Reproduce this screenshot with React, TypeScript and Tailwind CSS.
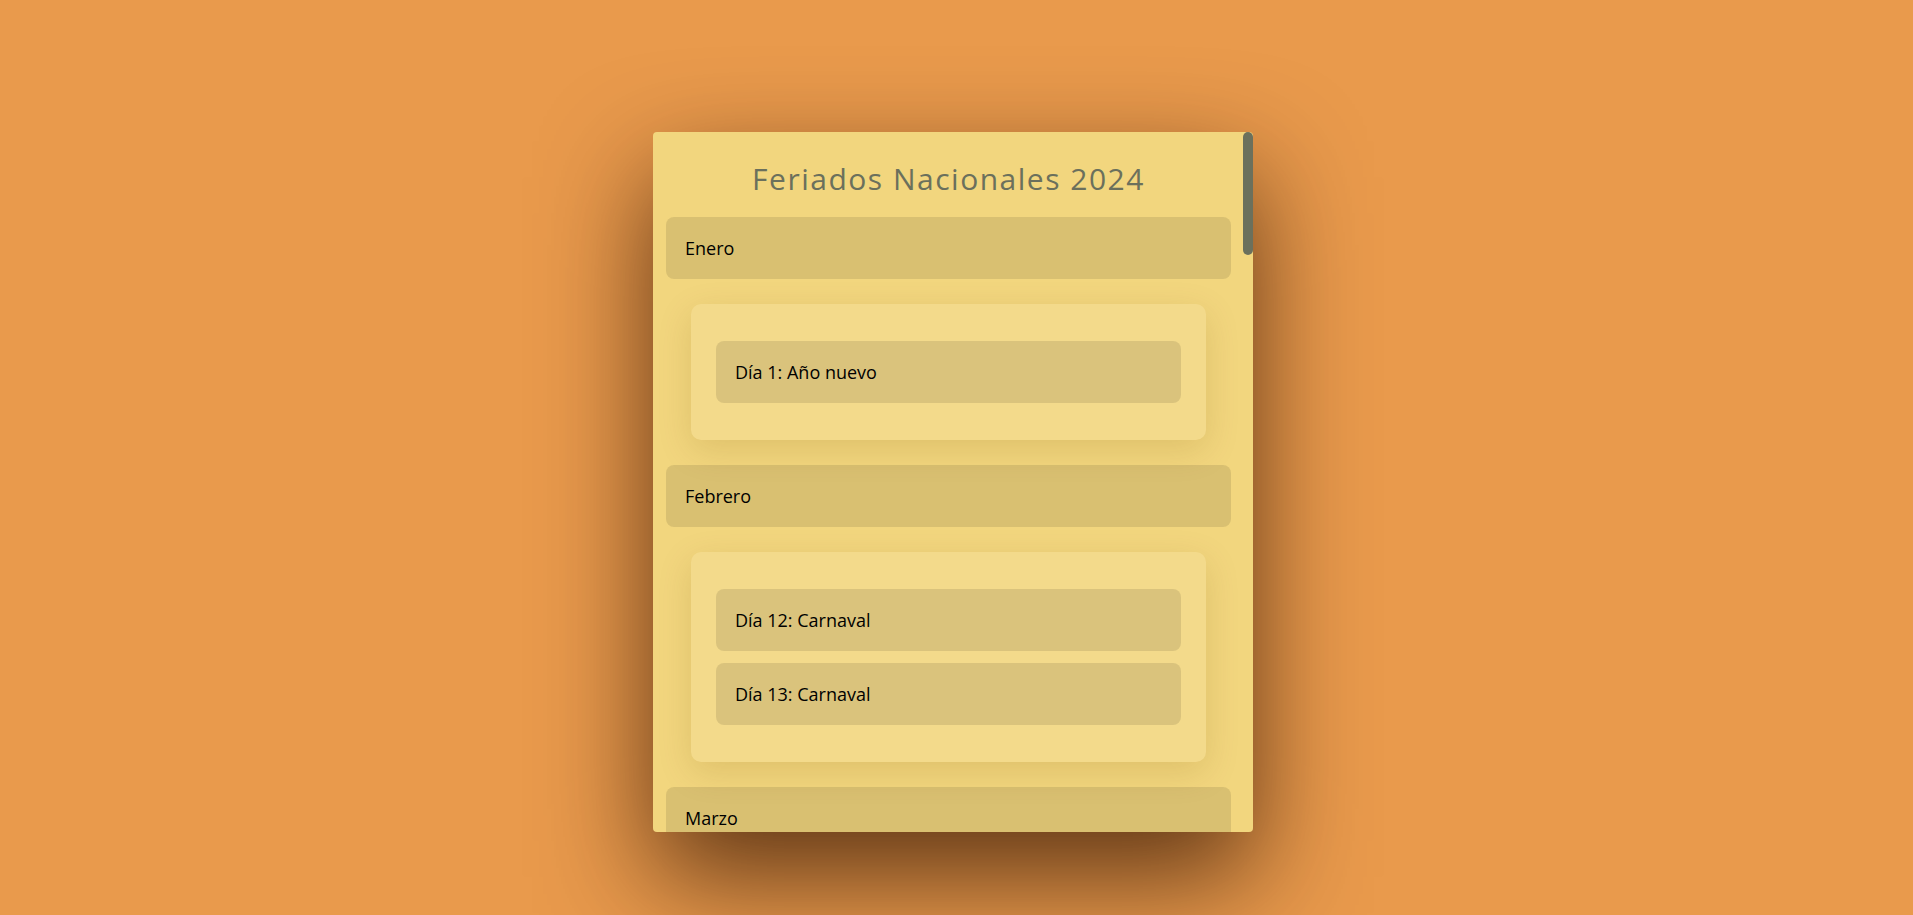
import React from "react";

type Month = { name: string; days: string[] };

const months: Month[] = [
  { name: "Enero", days: ["Día 1: Año nuevo"] },
  { name: "Febrero", days: ["Día 12: Carnaval", "Día 13: Carnaval"] },
  { name: "Marzo", days: ["Día 24: Día de la Memoria"] },
];

export default function App() {
  return (
    <div
      className="w-full h-screen overflow-hidden bg-[#e99a4c] flex justify-center pt-[132px] pr-[7px]"
      style={{ fontFamily: '"Open Sans", "Noto Sans", sans-serif' }}
    >
      <div className="w-[600px] h-[700px] rounded-[4px] bg-[#f2d67e] shadow-[0_45px_110px_rgba(40,15,0,0.72)] overflow-hidden flex">
        <div className="flex-1 min-w-0 h-full overflow-hidden pl-[13px] pr-[12px]">
          <h1 className="pt-[29px] mb-[20px] text-center text-[30px] leading-[36px] font-normal tracking-[1.5px] text-[#6b705c]">
            Feriados Nacionales 2024
          </h1>
          {months.map((m) => (
            <section key={m.name}>
              <div className="rounded-[8px] bg-[rgba(0,0,0,0.1)] py-[20px] pl-[19px] pr-[20px] text-[18px] leading-[22px] text-black">
                {m.name}
              </div>
              <div className="m-[25px] rounded-[10px] bg-[rgba(255,255,255,0.1)] p-[25px] shadow-[0_10px_34px_rgba(120,80,0,0.16)]">
                {m.days.map((d) => (
                  <div
                    key={d}
                    className="my-[12px] rounded-[8px] bg-[rgba(0,0,0,0.1)] py-[20px] pl-[19px] pr-[20px] text-[18px] leading-[22px] text-black"
                  >
                    {d}
                  </div>
                ))}
              </div>
            </section>
          ))}
        </div>
        <div className="w-[10px] shrink-0 h-full">
          <div className="h-[123px] w-full rounded-[5px] bg-[#6b705c]" />
        </div>
      </div>
    </div>
  );
}
